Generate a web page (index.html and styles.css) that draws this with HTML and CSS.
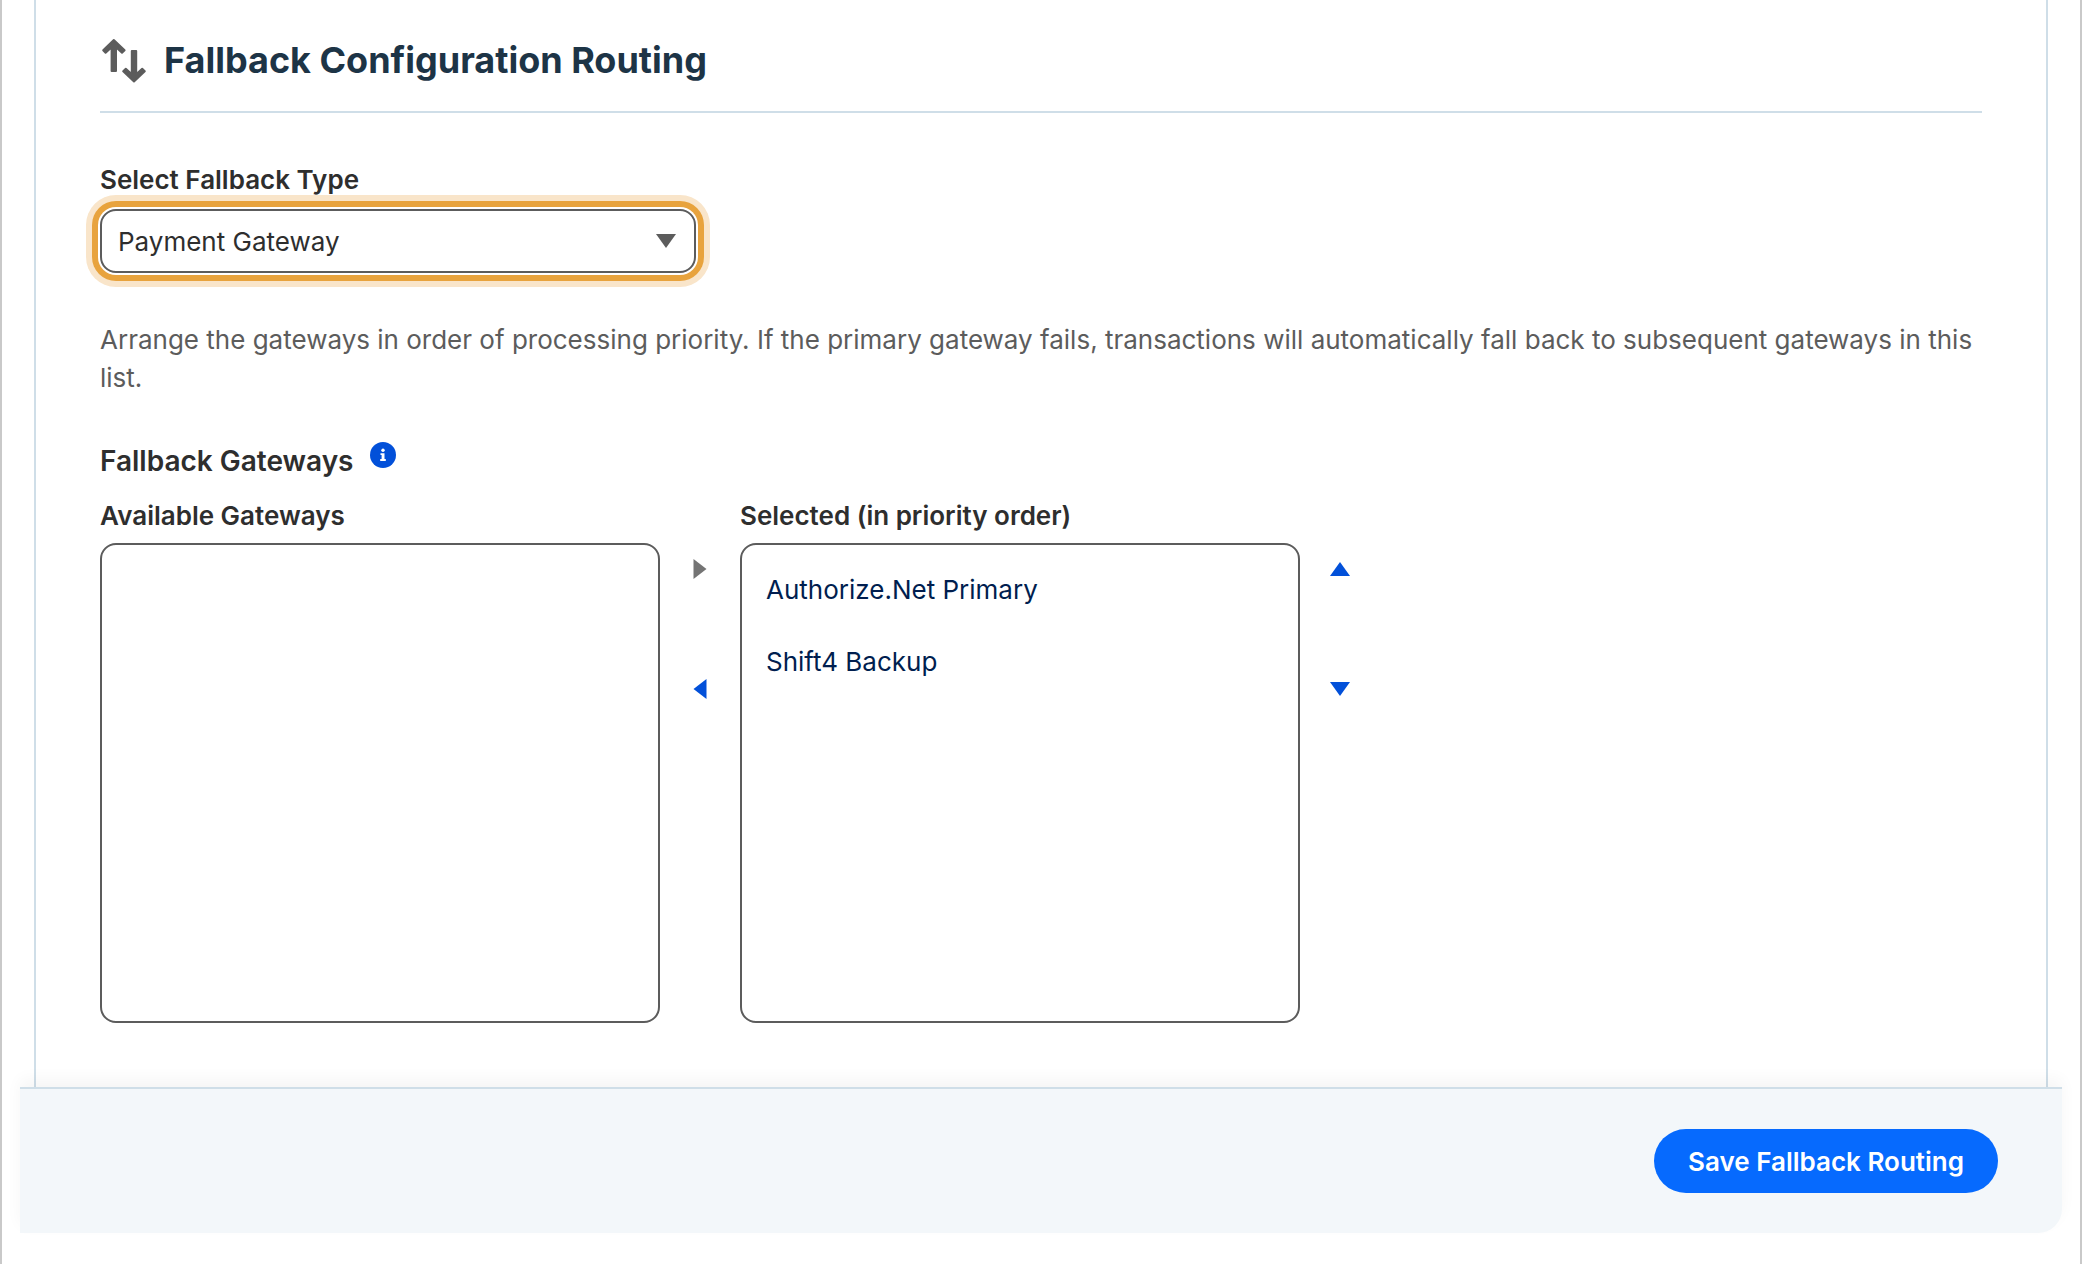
FILE: index.html
```html
<!DOCTYPE html>
<html lang="en">
<head>
  <meta charset="utf-8">
  <title>Fallback Configuration Routing</title>
  <link rel="stylesheet" href="styles.css">
</head>
<body>
  <form class="page">
    <!-- Routing Card -->
    <main class="card">
      <header class="card-header">
        <svg class="header-icon" viewBox="0 0 48 48" aria-hidden="true">
          <path d="M13.800 4L24.600 14.200L22 16.700L16 11.200V35H11.600V11.200L5.600 16.700L3.200 14.200Z"/>
          <path d="M34 45.400L44.800 35.200L42.200 32.800L36.200 38.200V15H31.800V38.200L25.800 32.800L23.200 35.200Z"/>
        </svg>
        <h1>Fallback Configuration Routing</h1>
      </header>

      <div class="field">
        <label for="fallbackType">Select Fallback Type</label>
        <div class="select-wrap">
          <select id="fallbackType" name="fallbackType">
            <option selected>Payment Gateway</option>
          </select>
          <svg class="select-arrow" viewBox="0 0 20 14" aria-hidden="true"><path d="M0 0H20L10 14Z"/></svg>
        </div>
      </div>

      <p class="help-text">Arrange the gateways in order of processing priority. If the primary gateway fails, transactions will automatically fall back to subsequent gateways in this list.</p>

      <!-- Gateway Lists -->
      <section>
        <div class="section-title">
          <h2>Fallback Gateways</h2>
          <button type="button" class="info" aria-label="About fallback gateways">
            <svg viewBox="0 0 26 26" aria-hidden="true">
              <circle cx="13" cy="13" r="13"/>
              <circle class="info-mark" cx="13" cy="8.300" r="1.700"/>
              <path class="info-mark" d="M10.500 11.200h4v5.900h1.300v1.800h-5.600v-1.800h1.400v-4.100h-1.100z"/>
            </svg>
          </button>
        </div>

        <div class="lists">
          <div class="list-column">
            <label for="available">Available Gateways</label>
            <select id="available" class="listbox" multiple></select>
          </div>
          <div class="arrows">
            <button type="button" aria-label="Add gateway" disabled>
              <svg viewBox="0 0 20 20" aria-hidden="true"><path d="M3.500 0V20L16.500 10Z"/></svg>
            </button>
            <button type="button" aria-label="Remove gateway">
              <svg viewBox="0 0 20 20" aria-hidden="true"><path d="M16.500 0V20L3.500 10Z"/></svg>
            </button>
          </div>
          <div class="list-column">
            <label for="chosen">Selected (in priority order)</label>
            <select id="chosen" class="listbox" multiple>
              <option>Authorize.Net Primary</option>
              <option>Shift4 Backup</option>
            </select>
          </div>
          <div class="arrows">
            <button type="button" aria-label="Move up">
              <svg viewBox="0 0 20 20" aria-hidden="true"><path d="M0 17H20L10 3Z"/></svg>
            </button>
            <button type="button" aria-label="Move down">
              <svg viewBox="0 0 20 20" aria-hidden="true"><path d="M0 3H20L10 17Z"/></svg>
            </button>
          </div>
        </div>
      </section>
    </main>

    <footer class="footer">
      <button type="submit" class="save">Save Fallback Routing</button>
    </footer>
  </form>
</body>
</html>
```
FILE: styles.css
```css
/* Global Styles */
* {
  box-sizing: border-box;
}
body {
  margin: 0;
  background-color: #fff;
  color: #2e2e2e;
  font-family: Inter, sans-serif;
  font-size: 26px;
  line-height: 38px;
}
h1, h2, p {
  margin: 0;
}
button, select {
  font: inherit;
}
button {
  border: none;
  padding: 0;
  background: none;
  cursor: pointer;
}
svg {
  display: block;
}
label {
  font-weight: 600;
}
.page {
  min-height: 100vh;
  border: 2px solid #c9c9c9;
  border-width: 0 2px;
}
.card {
  margin: 0 32px;
  padding: 36px 64px 64px;
  border: 2px solid #cfdee8;
  border-width: 0 2px;
}
.card-header {
  display: flex;
  align-items: center;
  gap: 16px;
  padding-bottom: 27px;
  border-bottom: 2px solid #cfdee8;
}
.card-header h1 {
  color: #1d3446;
  font-size: 36px;
  font-weight: 700;
  line-height: 48px;
}
.header-icon {
  width: 48px;
  height: 48px;
  fill: #5c5c5c;
  stroke: #5c5c5c;
  stroke-width: 2px;
  stroke-linejoin: round;
}

/* Fallback type drop-down */
.field {
  display: flex;
  flex-direction: column;
  gap: 10px;
  max-width: 596px;
  margin-top: 48px;
}
.select-wrap {
  display: grid;
  align-items: center;
}
.select-wrap > * {
  grid-area: 1 / 1;
}
.select-wrap select {
  appearance: none;
  width: 100%;
  height: 64px;
  padding: 2px 56px 0 16px;
  border: 2px solid #5c5c5c;
  border-radius: 16px;
  outline: none;
  background-color: #fff;
  color: #2e2e2e;
  box-shadow: 0 0 0 2px #fff, 0 0 0 8px #e8a33d, 0 0 0 14px #f9e5ca;
}
.select-arrow {
  justify-self: end;
  width: 20px;
  height: 14px;
  margin-right: 20px;
  fill: #5c5c5c;
  pointer-events: none;
}
.help-text {
  margin-top: 48px;
  color: #5c5c5c;
}

/* Gateway lists */
.section-title {
  display: flex;
  align-items: flex-start;
  gap: 16px;
  margin: 45px 0 17px;
}
.section-title h2 {
  font-size: 28px;
  font-weight: 600;
  line-height: 38px;
}
.info svg {
  width: 26px;
  height: 26px;
  fill: #0250d9;
}
.info .info-mark {
  fill: #fff;
}
.lists {
  display: flex;
}
.list-column {
  display: flex;
  flex-direction: column;
  flex: 0 1 560px;
  gap: 8px;
}
.listbox {
  width: 100%;
  height: 480px;
  padding: 12px 0;
  border: 2px solid #5c5c5c;
  border-radius: 16px;
  outline: none;
  background-color: #fff;
}
.listbox option {
  min-height: 72px;
  padding: 17px 24px;
  color: #001e4f;
  line-height: 38px;
}
.arrows {
  display: flex;
  flex-direction: column;
  align-items: center;
  gap: 100px;
  width: 80px;
  padding-top: 62px;
}
.arrows svg {
  width: 20px;
  height: 20px;
  fill: #0250d9;
}
.arrows button:disabled svg {
  fill: #747474;
}

/* Footer */
.footer {
  position: relative;
  display: flex;
  justify-content: flex-end;
  margin: 0 18px;
  padding: 40px 64px;
  border-top: 2px solid #cfdee8;
  border-bottom-right-radius: 24px;
  background-color: #f3f7fa;
  box-shadow: 0 -8px 16px rgba(0, 0, 0, 0.04);
}
.save {
  height: 64px;
  padding: 2px 34px 0;
  border-radius: 32px;
  background-color: #066afe;
  color: #fff;
  font-weight: 600;
}
```
